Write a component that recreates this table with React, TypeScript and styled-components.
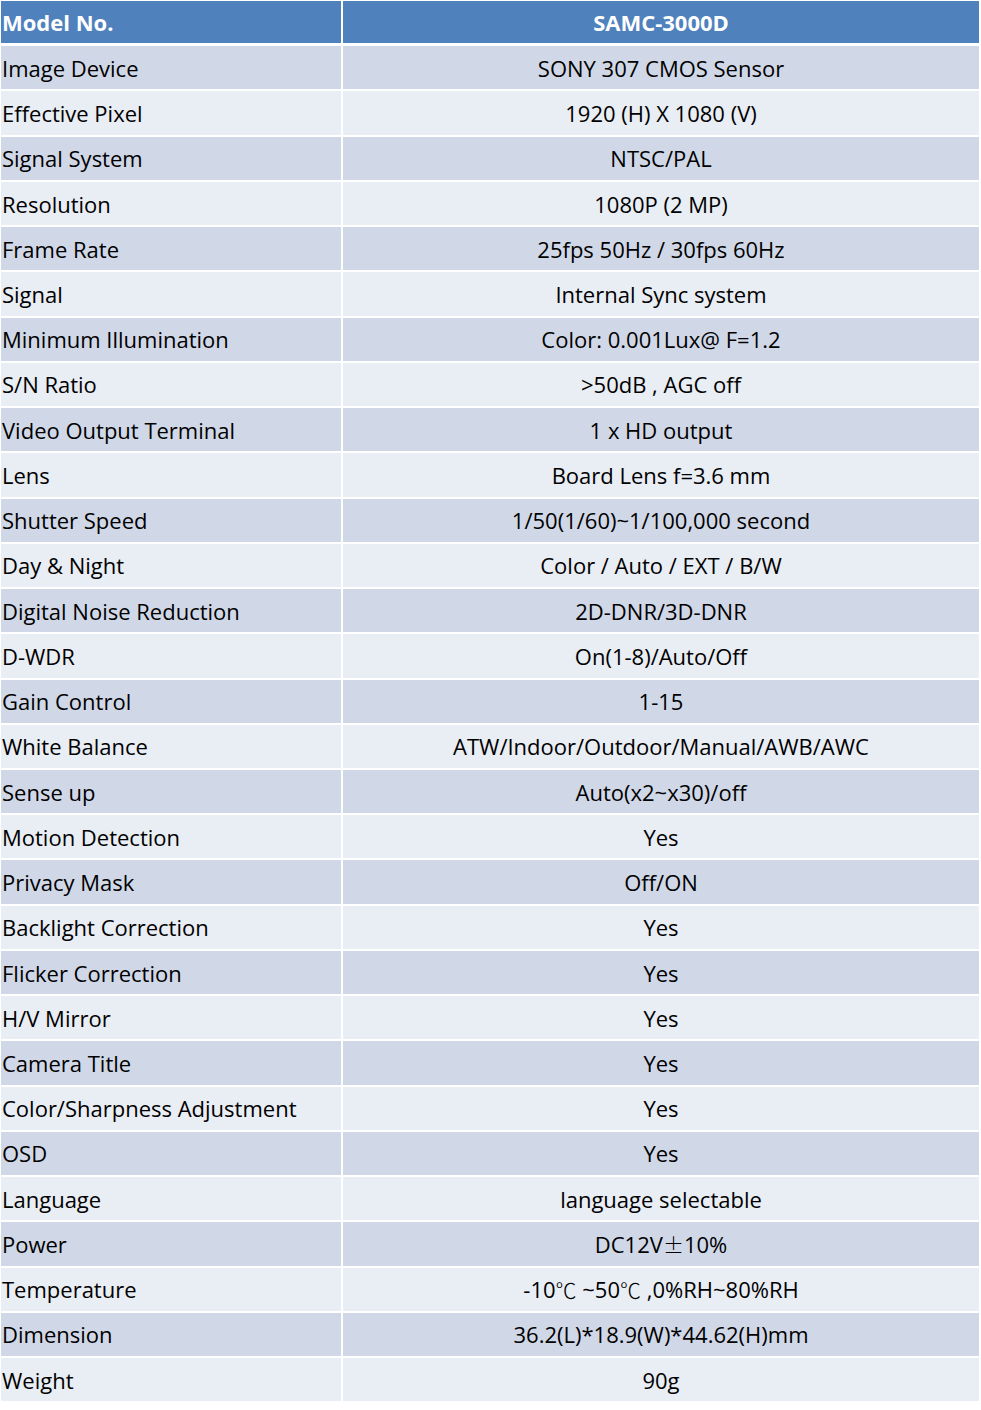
import React from 'react';
import styled, { createGlobalStyle } from 'styled-components';

const GlobalStyle = createGlobalStyle`
  html, body {
    margin: 0;
    padding: 0;
    background: #fff;
  }
  body {
    font-family: "Open Sans", Lato, sans-serif;
  }
`;

const Sym = styled.span`
  font-family: "Noto Sans CJK SC", sans-serif;
  font-weight: 300;
  font-size: 21px;
`;

const specs: [string, React.ReactNode][] = [
  ['Image Device', 'SONY 307 CMOS Sensor'],
  ['Effective Pixel', '1920 (H) X 1080 (V)'],
  ['Signal System', 'NTSC/PAL'],
  ['Resolution', '1080P (2 MP)'],
  ['Frame Rate', '25fps 50Hz / 30fps 60Hz'],
  ['Signal', 'Internal Sync system'],
  ['Minimum Illumination', 'Color: 0.001Lux@ F=1.2'],
  ['S/N Ratio', '>50dB , AGC off'],
  ['Video Output Terminal', '1 x HD output'],
  ['Lens', 'Board Lens f=3.6 mm'],
  ['Shutter Speed', '1/50(1/60)~1/100,000 second'],
  ['Day & Night', 'Color / Auto / EXT / B/W'],
  ['Digital Noise Reduction', '2D-DNR/3D-DNR'],
  ['D-WDR', 'On(1-8)/Auto/Off'],
  ['Gain Control', '1-15'],
  ['White Balance', 'ATW/Indoor/Outdoor/Manual/AWB/AWC'],
  ['Sense up', 'Auto(x2~x30)/off'],
  ['Motion Detection', 'Yes'],
  ['Privacy Mask', 'Off/ON'],
  ['Backlight Correction', 'Yes'],
  ['Flicker Correction', 'Yes'],
  ['H/V Mirror', 'Yes'],
  ['Camera Title', 'Yes'],
  ['Color/Sharpness Adjustment', 'Yes'],
  ['OSD', 'Yes'],
  ['Language', 'language selectable'],
  [
    'Power',
    <>
      DC12V<Sym>{'\u00B1'}</Sym>10%
    </>,
  ],
  [
    'Temperature',
    <>
      -10<Sym>{'\u2103'}</Sym> ~50<Sym>{'\u2103'}</Sym> ,0%RH~80%RH
    </>,
  ],
  ['Dimension', '36.2(L)*18.9(W)*44.62(H)mm'],
  ['Weight', '90g'],
];

const Sheet = styled.div`
  width: 978px;
  padding: 1px 0 0 1px;
  display: grid;
  grid-template-columns: 340px 636px;
  grid-auto-rows: 43.24px;
  column-gap: 2px;
  row-gap: 2px;
`;

const Cell = styled.div<{ $shade: 'head' | 'dark' | 'light'; $center?: boolean }>`
  display: flex;
  align-items: center;
  justify-content: ${(p) => (p.$center ? 'center' : 'flex-start')};
  padding-left: ${(p) => (p.$center ? '0' : '1px')};
  font-size: 22px;
  white-space: pre;
  color: ${(p) => (p.$shade === 'head' ? '#fff' : '#000')};
  font-weight: ${(p) => (p.$shade === 'head' ? 700 : 400)};
  background: ${(p) =>
    p.$shade === 'head' ? '#4f81bd' : p.$shade === 'dark' ? '#d0d8e8' : '#e9edf4'};
  ${(p) => (p.$shade === 'head' ? 'height: 42px; margin-bottom: 3px;' : '')}
`;

export default function App(): JSX.Element {
  return (
    <>
      <GlobalStyle />
      <Sheet>
        <Cell $shade="head">Model No.</Cell>
        <Cell $shade="head" $center>
          SAMC-3000D
        </Cell>
        {specs.map(([label, value], i) => {
          const shade = i % 2 === 0 ? 'dark' : 'light';
          return (
            <React.Fragment key={label}>
              <Cell $shade={shade}>{label}</Cell>
              <Cell $shade={shade} $center>
                {value}
              </Cell>
            </React.Fragment>
          );
        })}
      </Sheet>
    </>
  );
}
